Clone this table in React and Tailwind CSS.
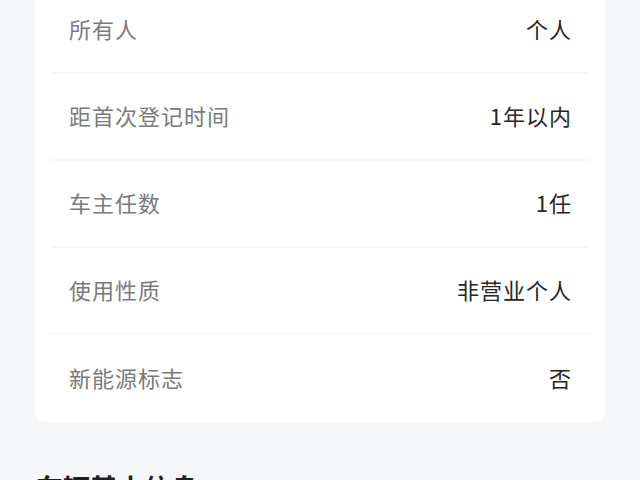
export default function App() {
  const rows = [
    ["所有人", "个人"],
    ["距首次登记时间", "1年以内"],
    ["车主任数", "1任"],
    ["使用性质", "非营业个人"],
    ["新能源标志", "否"],
  ];
  return (
    <div
      className="w-[640px] h-[480px] overflow-hidden bg-[#f6f7f9]"
      style={{ fontFamily: '"Noto Sans CJK SC", "Noto Sans", sans-serif' }}
    >
      <div className="mx-[35px] mt-[-13px] bg-white rounded-[10px] px-[17px]">
        {rows.map(([k, v], i) => (
          <div
            key={k}
            className={`h-[87px] flex items-center justify-between px-[17px] pb-[3px] ${
              i < rows.length - 1 ? "border-b-2 border-[#f6f7f8]" : ""
            }`}
          >
            <span className="text-[22px] text-[#7a7a7a] tracking-[1px]">{k}</span>
            <span className="text-[22px] text-[#262626] tracking-[1px] mr-[-1px]">{v}</span>
          </div>
        ))}
      </div>
      <div className="mx-[36px] mt-[52px] text-[27px] font-bold text-[#1f1f1f] leading-none">
        车辆基本信息
      </div>
    </div>
  );
}
